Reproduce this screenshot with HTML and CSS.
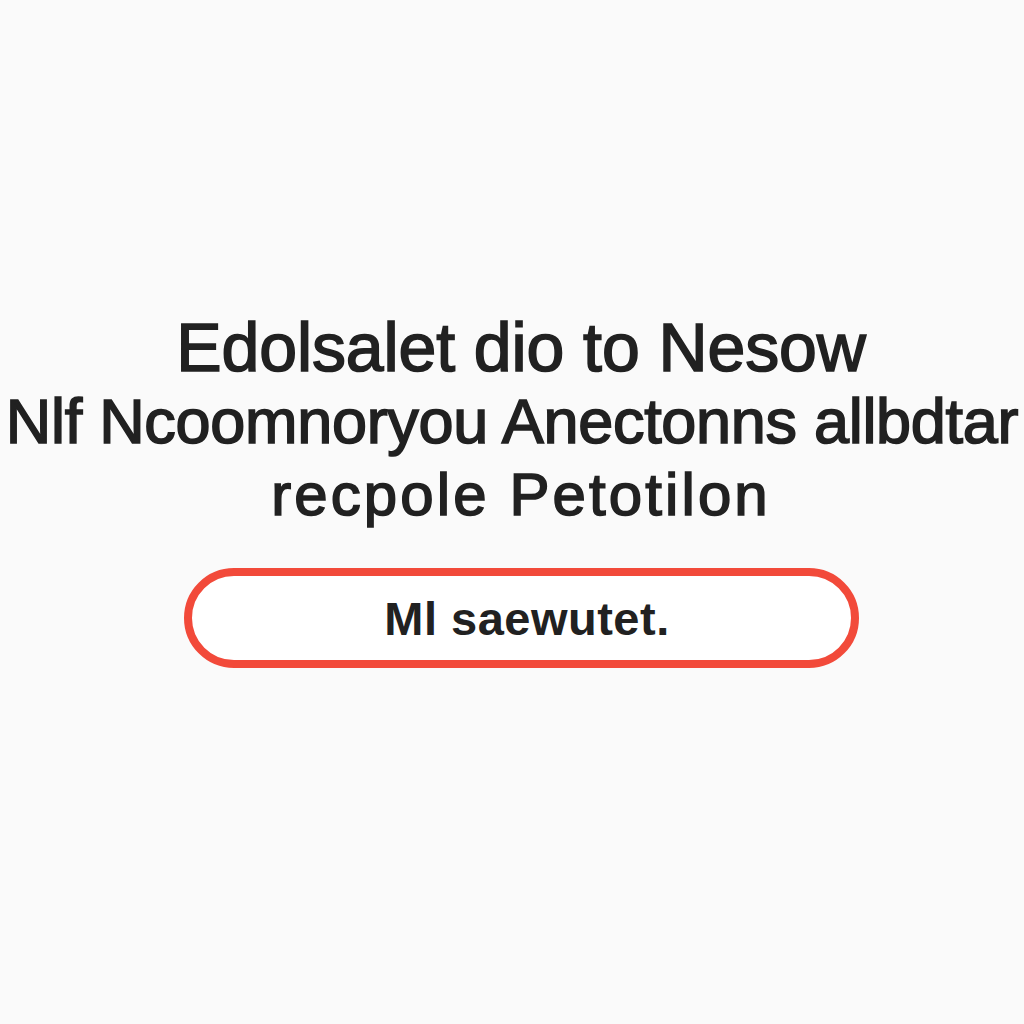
FILE: index.html
```html
<!DOCTYPE html>
<html>
<head>
<meta charset="utf-8">
<link rel="stylesheet" href="styles.css">
</head>
<body>
<main class="page">
  <h1 class="headline">
    <span class="line line-1">Edolsalet dio to Nesow</span>
    <span class="line line-2">Nlf Ncoomnoryou Anectonns allbdtar</span>
    <span class="line line-3">recpole Petotilon</span>
  </h1>
  <button class="cta">Ml saewutet.</button>
</main>
</body>
</html>
```
FILE: styles.css
```css
html, body {
  margin: 0;
  padding: 0;
  background: #fafafa;
}
.page {
  width: 1024px;
  height: 1024px;
  display: flex;
  flex-direction: column;
  align-items: center;
  padding-top: 309px;
  padding-left: 18px;
  box-sizing: border-box;
  overflow: hidden;
  font-family: "Liberation Sans", Arial, sans-serif;
  color: #212121;
}
.headline {
  margin: 0;
  display: flex;
  flex-direction: column;
  align-items: center;
  font-weight: normal;
  white-space: nowrap;
  -webkit-text-stroke: 1.6px #212121;
}
.line {
  display: block;
}
.line-1 {
  font-size: 68px;
  line-height: 76px;
  letter-spacing: -0.1px;
}
.line-2 {
  font-size: 63px;
  line-height: 72px;
  letter-spacing: -0.3px;
  margin-right: 18px;
}
.line-3 {
  font-size: 60px;
  line-height: 75px;
  letter-spacing: 3.1px;
}
.cta {
  margin-top: 36px;
  width: 675px;
  height: 100px;
  border: 8px solid #f24a3a;
  border-radius: 50px;
  background: #fff;
  font-family: "Liberation Sans", Arial, sans-serif;
  font-size: 47px;
  font-weight: bold;
  color: #212121;
  letter-spacing: 0.5px;
  padding: 0 0 0 12px;
}
```
